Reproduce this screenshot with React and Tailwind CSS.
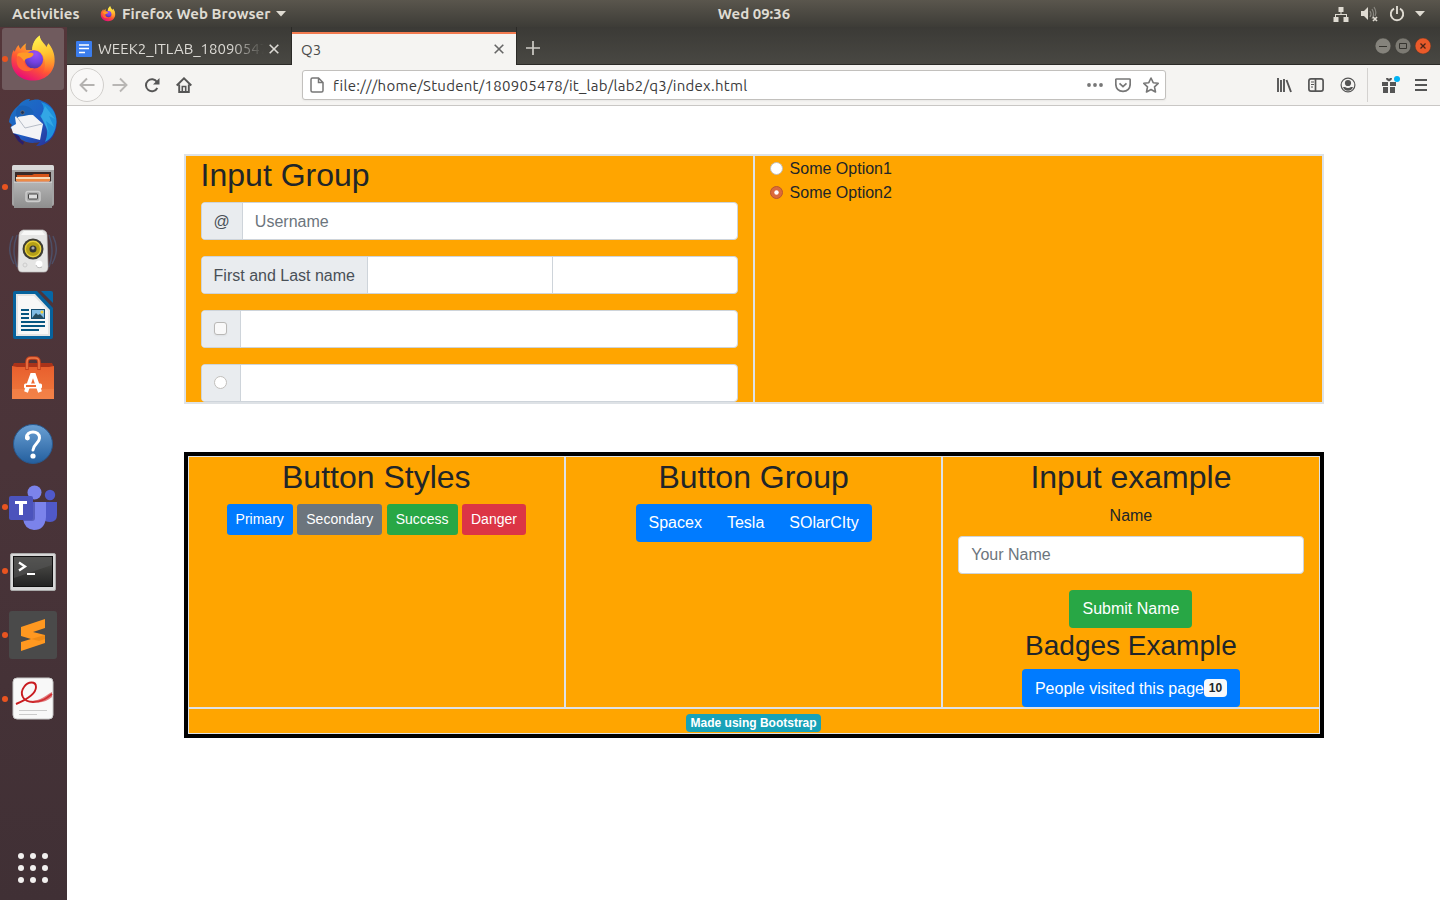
import React from "react";

const Firefox = ({ id, className }) => (
  <svg viewBox="-1 0 50 49" className={className}>
    <defs>
      <linearGradient id={id + "a"} x1="0.8" y1="0" x2="0.3" y2="1">
        <stop offset="0" stopColor="#fff44f" />
        <stop offset="0.35" stopColor="#ffa52b" />
        <stop offset="0.65" stopColor="#ff5634" />
        <stop offset="1" stopColor="#e6087c" />
      </linearGradient>
      <linearGradient id={id + "b"} x1="0.3" y1="0" x2="0.5" y2="1">
        <stop offset="0" stopColor="#fff64f" />
        <stop offset="0.5" stopColor="#ffc532" />
        <stop offset="1" stopColor="#ff8426" stopOpacity="0" />
      </linearGradient>
      <radialGradient id={id + "c"} cx="0.6" cy="0.2" r="0.9">
        <stop offset="0" stopColor="#9a50f5" />
        <stop offset="0.5" stopColor="#7542e5" />
        <stop offset="1" stopColor="#4a3198" />
      </radialGradient>
    </defs>
    <path fill={`url(#${id}a)`} d="M9 10C9.500 12 10 13 11 14C13 11 15 9 17 8C16 10 16 13 17 15L24 15C23 8 27 3 31 0C31 5 36 8 38 12L40 8C44 13 47 19 46.500 27C46 39 36 47 24 47C11 47 1.500 38 1.500 26C1.500 22 2 18 4 15L5 17C6 14 7 12 9 10Z" />
    <path fill={`url(#${id}b)`} d="M23 15C23 8 27 3 31 0C31 5 35 8 38 13L40 9C44 14 46 20 45 28C44 36 39 40 33 41C39 34 37 21 30 16Z" />
    <circle cx="25" cy="25" r="9.500" fill={`url(#${id}c)`} />
    <path fill="#ff9a25" d="M8 19C12 17 17 18 21 18C26 18 25 20 23 22C21 24 18 23 16 25C12 29 16 34 20 34C16 37 10 34 8 29C7 26 7 22 8 19Z" />
    <path fill="#ff6333" d="M8 21C12 22 14 25 15 28C16 33 20 35 25 34C21 39 13 38 9 33C7 30 6 25 8 21Z" />
  </svg>
);

const Thunderbird = () => (
  <svg viewBox="0 0 48 48" className="size-12">
    <defs>
      <linearGradient id="tb" x1="0" y1="0" x2="1" y2="1">
        <stop offset="0" stopColor="#1b75c4" />
        <stop offset="0.5" stopColor="#1e5fc5" />
        <stop offset="1" stopColor="#2c298f" />
      </linearGradient>
    </defs>
    <path fill="url(#tb)" d="M10 6C14 1 18 0 21 0L20 2C26 0 30 0 33 2C43 5 49 15 47.500 27C46 39 38 47 27 47L31 43C18 46 14 41 8 38L4 34L5 31L1 29L3 26L0 23C1 16 4 11 10 6Z" />
    <path fill="#1e91dc" d="M32 3C43 6 49 16 47 26C46 34 42 40 36 43C40 34 38 24 31 17C35 13 36 8 32 3Z" />
    <path fill="#3cb0e8" opacity=".7" d="M36 7L46 20L40 17L45 28L37 22L40 34L32 18Z" />
    <path fill="#2b1f6b" d="M4 34L10 37L12 41L15 43L14 46L9 42Z" />
    <path fill="#f3f4f6" d="M6 18L10 15L24 16L34 25L31 41L4 34L2 28L7 25Z" />
    <path fill="none" stroke="#b6bcc6" strokeWidth="1" d="M8 18L16 29L33 25" />
    <path fill="#1961b7" d="M10 7C16 5 23 8 25 14C18 18 11 16 8 19C6 15 7 10 10 7Z" />
    <circle cx="13.500" cy="13.500" r="1.800" fill="#17335f" stroke="#9b7656" strokeWidth=".5" />
  </svg>
);

const Files = () => (
  <svg viewBox="0 0 48 48" className="size-12">
    <defs>
      <linearGradient id="fi" x1="0" y1="0" x2="0" y2="1">
        <stop offset="0" stopColor="#b4b4b4" />
        <stop offset="1" stopColor="#8e8e8e" />
      </linearGradient>
    </defs>
    <rect x="3" y="2" width="42" height="41" rx="2" fill="#a4a4a4" />
    <path fill="#d9d9d9" d="M5 2H43Q45 2 45 5V7H3V5Q3 2 5 2Z" />
    <rect x="6" y="9" width="36" height="12" fill="#3a2a28" />
    <path fill="#d65519" d="M8 14V12H23L25 11H40V20H8Z" />
    <path fill="#f7d9b7" d="M7 14H41V16H7Z" />
    <path fill="#ed8b45" d="M7 16H41V18H7Z" />
    <path fill="url(#fi)" d="M5 19H43V45H5Z" />
    <path d="M5 19H43" stroke="#ddd" />
    <rect x="17" y="28.500" width="14" height="10" rx="2" fill="#aaa" stroke="#ccc" strokeWidth="1.500" />
    <rect x="19.500" y="31" width="9" height="5" rx=".5" fill="#ddd" stroke="#444" />
  </svg>
);

const Speaker = () => (
  <svg viewBox="0 0 48 48" className="size-12">
    <g fill="none" stroke="#4c648a" strokeWidth="1.500" opacity=".55">
      <path d="M4 9Q-3 23 5 37M8 8Q2 23 8 40M44 9Q51 23 43 37M40 8Q46 23 40 40" />
    </g>
    <path fill="#e5e5e4" stroke="#bfbfbf" strokeWidth=".7" d="M14 3H34Q38 4 38 8L39 40Q39 45 35 45H13Q9 45 9 40L10 8Q10 4 14 3Z" />
    <path fill="#f8f8f7" d="M15 4H33L36 8H12Z" />
    <circle cx="24" cy="22" r="10.500" fill="#3f3e35" />
    <circle cx="24" cy="22" r="7.700" fill="#b59f17" stroke="#e8cf39" strokeWidth="1.400" />
    <circle cx="24" cy="22" r="3.500" fill="#343434" />
    <circle cx="24" cy="21" r="1.600" fill="#aaa" />
    <circle cx="30" cy="37" r="3.500" fill="#fff" />
    <path d="M27 38Q28 42 33 40" stroke="#bbb" fill="none" />
    <circle cx="16" cy="38" r="2" fill="none" stroke="#ccc" />
  </svg>
);

const Writer = () => (
  <svg viewBox="0 0 48 48" className="size-12">
    <path fill="#06629d" d="M6 0H28L44 17V46Q44 48 42 48H6Q4 48 4 46V2Q4 0 6 0Z" />
    <path fill="#0667a5" d="M32 0H42Q44 0 44 2V12Z" />
    <path fill="#e4e4e4" d="M7 3H26L41 19V45H7Z" />
    <path fill="#f7f7f7" d="M9 5H25L39 20V43H9Z" />
    <g stroke="#075681" strokeWidth="1.800">
      <path d="M12 19H20M12 23H20M12 27H20M12 31H36M12 35H36M12 39H30" />
    </g>
    <rect x="22.500" y="18.500" width="13" height="9" fill="#82bce4" stroke="#164d70" />
    <circle cx="33" cy="21" r="1.500" fill="#f5cf35" />
    <path fill="#284c5d" d="M23 27L27 22L29 24L31 23L35 27Z" />
  </svg>
);

const Software = () => (
  <svg viewBox="0 -1 48 48" className="size-12">
    <defs>
      <linearGradient id="so" x1="0" y1="0" x2="0" y2="1">
        <stop offset="0" stopColor="#e85f2d" />
        <stop offset="1" stopColor="#f07a3e" />
      </linearGradient>
    </defs>
    <path fill="#a9331a" d="M5 7H43L45 11H3Z" />
    <path fill="url(#so)" d="M3 10L8 11H40L45 10V43H3Z" />
    <path fill="#f58a52" d="M3 33H45V43H3Z" opacity=".5" />
    <path d="M18 14V6Q18 2 22 2H26Q30 2 30 6V14" fill="none" stroke="#c6421e" strokeWidth="3.500" />
    <path d="M18 13V6Q18 2 22 2H26Q30 2 30 6V13" fill="none" stroke="#ef7b49" strokeWidth="1.500" />
    <path d="M17 36L23 19H25L31 36" fill="none" stroke="#fff" strokeWidth="4" />
    <rect x="15" y="27.500" width="18" height="5" rx="1.500" fill="#fff" />
    <rect x="17" y="29" width="10" height="2" fill="#ef6d35" />
  </svg>
);

const Help = () => (
  <svg viewBox="0 -1 48 48" className="size-12">
    <defs>
      <linearGradient id="he" x1="0" y1="0" x2="0" y2="1">
        <stop offset="0" stopColor="#6aa0d4" />
        <stop offset="1" stopColor="#245f9e" />
      </linearGradient>
    </defs>
    <circle cx="24" cy="24" r="19.500" fill="url(#he)" stroke="#28588d" />
    <circle cx="18.500" cy="18" r="2.400" fill="#fff" />
    <path d="M17.500 18C17 10 31 10 30.500 18C30.500 23 24.300 24 24 30" fill="none" stroke="#fff" strokeWidth="3" strokeLinecap="round" />
    <circle cx="24" cy="36" r="2.600" fill="#fff" />
  </svg>
);

const Teams = () => (
  <svg viewBox="0 0 48 48" className="size-12">
    <circle cx="41" cy="12" r="5.200" fill="#5059c9" />
    <path fill="#5059c9" d="M34 19H48V32Q48 39 41 39Q36 39 34 36Z" />
    <circle cx="25.500" cy="9.500" r="7" fill="#7b83eb" />
    <path fill="#7b83eb" d="M14 19H37V34Q36 47 25 47Q15 46 14 35Z" />
    <path fill="#4a50ad" opacity=".7" d="M14 19H26V35Q26 38 23 38H14Z" />
    <rect y="13" width="24" height="24" rx="2" fill="#4b53bc" />
    <path fill="#fff" d="M6 18H18V21H14V32H10V21H6Z" />
  </svg>
);

const Terminal = () => (
  <svg viewBox="0 -1 48 48" className="size-12">
    <defs>
      <linearGradient id="te" x1="0" y1="0" x2="0" y2="1">
        <stop offset="0" stopColor="#545450" />
        <stop offset="1" stopColor="#222" />
      </linearGradient>
    </defs>
    <rect x="1.500" y="5.500" width="45" height="37" rx="1.500" fill="#d7d7d7" stroke="#aaa" />
    <rect x="4.500" y="8.500" width="39" height="30" fill="url(#te)" stroke="#111" />
    <path fill="#555" opacity=".6" d="M5 9H43V17L5 30Z" />
    <path d="M10 14.500L16 18.500L10 22.500" stroke="#fff" strokeWidth="2.300" fill="none" />
    <path d="M18 26H26" stroke="#fff" strokeWidth="2" />
  </svg>
);

const Sublime = () => (
  <svg viewBox="0 0 48 48" className="size-12">
    <rect width="48" height="48" rx="3" fill="#4a4a4a" />
    <path fill="#ff9820" d="M12 16L36 8V17L24 21L36 24V32L12 40V31L22 28L12 25Z" />
    <path fill="#e38010" d="M22 28L36 24V28L30 30Z" opacity=".6" />
  </svg>
);

const Reader = () => (
  <svg viewBox="0 1 48 48" className="size-12">
    <rect x="4" y="4" width="40" height="41" rx="4" fill="#f8f8f8" stroke="#c8c8c8" />
    <path d="M7 30C19 25 27 19 27 13C27 7 19 7 15 13C10 20 14 28 24 28C33 28 38 24 43 20" fill="none" stroke="#c91c20" strokeWidth="1.900" />
    <path fill="#d63b3d" opacity=".65" d="M20 27C33 27 38 20 43 18V23C37 28 31 30 20 27Z" />
    <path d="M10 36.500H38M10 40.500H28" stroke="#cbcbcb" />
  </svg>
);

const dock = [
  { Icon: () => <Firefox id="dock" className="size-12" />, running: true, active: true },
  { Icon: Thunderbird },
  { Icon: Files, running: true },
  { Icon: Speaker },
  { Icon: Writer },
  { Icon: Software },
  { Icon: Help },
  { Icon: Teams, running: true },
  { Icon: Terminal, running: true },
  { Icon: Sublime, running: true },
  { Icon: Reader, running: true },
];

function TopBar() {
  return (
    <header className="grid h-[27px] shrink-0 grid-cols-3 items-center bg-linear-to-b from-[#5a564d] to-[#3d3c37] text-[15px] font-bold leading-none text-[#dfdbd2]">
      <div className="flex items-center pl-3">
        <span className="w-[68px] whitespace-nowrap tracking-[0.1px]">Activities</span>
        <Firefox id="bar" className="ml-5 size-4" />
        <span className="ml-[6px] w-[149px] whitespace-nowrap tracking-[0.07px]">Firefox Web Browser</span>
        <svg viewBox="0 0 10 6" className="ml-[5px] h-[6px] w-[10px]"><path fill="#dfdbd2" d="M0 0H10L5 5.500Z" /></svg>
      </div>
      <div className="pl-[68px] text-center"><span>Wed 09:36</span></div>
      <div className="flex items-center justify-end pr-[15px]">
        <svg viewBox="0 0 16 16" className="size-4"><path fill="#dfdbd2" d="M5.500 1H10.500V6H8.500V8H14V11H15.500V16H10.500V11H13V9H3V11H5.500V16H.5V11H2V8H7.500V6H5.500Z" /></svg>
        <svg viewBox="0 0 17 16" className="ml-3 h-4 w-[17px]">
          <path fill="#dfdbd2" d="M0 5H3L7 1V14L3 10H0Z" />
          <path d="M9 5Q11 8 9 11M11 3Q14 8 11 13M13 1Q16 6 14 10" stroke="#898780" fill="none" strokeWidth="1.200" />
          <path d="M12 11L16 15M16 11L12 15" stroke="#dfdbd2" strokeWidth="1.700" />
        </svg>
        <svg viewBox="0 0 16 16" className="ml-[11px] size-4"><path d="M5 2.600A6.200 6.200 0 1 0 11 2.600M8 0V8" fill="none" stroke="#dfdbd2" strokeWidth="1.900" /></svg>
        <svg viewBox="0 0 10 6" className="ml-[10px] h-[6px] w-[10px]"><path fill="#dfdbd2" d="M0 0H10L5 5.500Z" /></svg>
      </div>
    </header>
  );
}

function Dock() {
  return (
    <nav className="flex w-[67px] shrink-0 flex-col bg-linear-to-b from-[#54363a] via-[#4a3439] to-[#403035]">
      {dock.map(({ Icon, running, active }, i) => (
        <div key={i} className="flex h-16 items-center pl-[2px]">
          <div className={active ? "flex h-[62px] w-[62px] items-center gap-px rounded-[3px] bg-[#705b5e]" : "flex h-[62px] w-[62px] items-center gap-px"}>
            <span className={running ? "size-[6px] shrink-0 rounded-full bg-[#e95420]" : "size-[6px] shrink-0"} />
            <Icon />
          </div>
        </div>
      ))}
      <div className="mt-auto mb-[17px] ml-[18px] grid w-[30px] grid-cols-3 gap-[6px]">
        {Array.from({ length: 9 }, (_, i) => <span key={i} className="size-[6px] rounded-full bg-[#f2f0ef]" />)}
      </div>
    </nav>
  );
}

const Close = ({ className }) => (
  <svg viewBox="0 0 10 10" className={className}><path d="M.7 .7L9.300 9.300M9.300 .7L.7 9.300" stroke="currentColor" strokeWidth="1.600" /></svg>
);

function TabStrip() {
  return (
    <div className="flex h-[38px] shrink-0 bg-linear-to-b from-[#3b3a36] to-[#494843] text-[15px] leading-none">
      <div className="flex w-[225px] items-center border-r border-b border-[#2b2a27] pl-[9px] pt-[6px] text-[#dcdad5]">
        <svg viewBox="0 0 16 16" className="size-4"><rect width="16" height="16" rx="1" fill="#3b7ded" /><path d="M3 4H13M3 7.500H13M3 11.500H9" stroke="#fff" strokeWidth="1.600" /></svg>
        <span className="ml-[6px] w-[166px] overflow-hidden whitespace-nowrap py-1 [mask-image:linear-gradient(to_right,black_80%,transparent_100%)]">WEEK2_ITLAB_180905478</span>
        <Close className="ml-[5px] size-[10px]" />
      </div>
      <div className="mt-[5px] flex w-[224px] items-center justify-between border-t-2 border-[#f27b50] bg-[#f5f4f2] pb-px pl-[9px] pr-3 text-[#4c4c4c]">
        <span>Q3</span>
        <Close className="size-[10px] text-[#666]" />
      </div>
      <div className="flex flex-1 items-center border-b border-l border-[#2b2a27] pl-[9px] pt-[5px]">
        <svg viewBox="0 0 14 14" className="size-[14px]"><path d="M7 0V14M0 7H14" stroke="#cfcdc7" strokeWidth="1.700" /></svg>
        <div className="mb-[5px] ml-auto mr-[9px] flex gap-1">
          <svg viewBox="0 0 16 16" className="size-4"><circle cx="8" cy="8" r="7.900" fill="#85837c" stroke="#302f2c" strokeWidth=".4" /><path d="M4 8.500H12" stroke="#35342f" /></svg>
          <svg viewBox="0 0 16 16" className="size-4"><circle cx="8" cy="8" r="7.900" fill="#7c7a73" stroke="#302f2c" strokeWidth=".4" /><path d="M4.500 5.500H11.500V10.500H4.500Z" fill="none" stroke="#35342f" /></svg>
          <svg viewBox="0 0 16 16" className="size-4"><circle cx="8" cy="8" r="7.900" fill="#ea5a2a" stroke="#52301f" strokeWidth=".4" /><path d="M5.500 5.500L10.500 10.500M10.500 5.500L5.500 10.500" stroke="#4b2417" strokeWidth="1.300" /></svg>
        </div>
      </div>
    </div>
  );
}

function Toolbar() {
  return (
    <div className="flex h-[41px] shrink-0 items-center border-b border-[#c9c7c5] bg-[#f5f4f2] pl-[3px] text-[#555]">
      <div className="flex size-[34px] items-center justify-center rounded-full border border-[#d1cfcc] bg-[#f9f8f7]">
        <svg viewBox="0 0 16 16" className="size-4"><path d="M15.500 8H1.500M8 1.500L1.500 8L8 14.500" fill="none" stroke="#b4b2b0" strokeWidth="1.900" /></svg>
      </div>
      <svg viewBox="0 0 16 16" className="ml-2 size-4"><path d="M.5 8H14.500M8 1.500L14.500 8L8 14.500" fill="none" stroke="#b8b6b4" strokeWidth="1.900" /></svg>
      <svg viewBox="0 0 16 16" className="ml-4 size-4"><path d="M13 5A6 6 0 1 0 13.300 11" fill="none" stroke="#555" strokeWidth="2" /><path fill="#555" d="M15.500 1V7.500H9Z" /></svg>
      <svg viewBox="0 0 16 16" className="ml-4 size-4"><path d="M.7 8.500L8 1.300L15.300 8.500M3.200 7.500V15H12.800V7.500" fill="none" stroke="#555" strokeWidth="1.900" /><path d="M6.300 15V9.500H9.700V15" fill="none" stroke="#555" strokeWidth="1.600" /></svg>
      <div className="ml-[110px] flex h-[30px] w-[864px] items-center rounded-[3px] border border-[#c2c0bd] bg-white pl-[7px] pr-[6px] shadow-xs">
        <svg viewBox="0 0 14 16" className="h-4 w-[14px]"><path d="M2.500 1H8.500L13 5.500V13.500Q13 15 11.500 15H2.500Q1 15 1 13.500V2.500Q1 1 2.500 1ZM8.500 1V5.500H13" fill="none" stroke="#777" strokeWidth="1.500" /></svg>
        <span className="ml-[9px] whitespace-nowrap pt-[2px] text-[15px] tracking-[0.27px] text-[#3b3b3b]">file:///home/Student/180905478/it_lab/lab2/q3/index.html</span>
        <svg viewBox="0 0 16 4" className="ml-auto h-1 w-4"><g fill="#777"><circle cx="2" cy="2" r="1.900" /><circle cx="8" cy="2" r="1.900" /><circle cx="14" cy="2" r="1.900" /></g></svg>
        <svg viewBox="0 0 16 16" className="ml-3 size-4"><path d="M1.500 2H14.500Q15.200 2 15.200 3V7Q15 14 8 14.300Q1 14 .8 7V3Q.8 2 1.500 2ZM4.500 6.300L8 9.600L11.500 6.300" fill="none" stroke="#777" strokeWidth="1.700" /></svg>
        <svg viewBox="0 0 16 16" className="ml-3 size-4"><path d="M8 1L10.200 5.700L15.200 6.300L11.500 9.800L12.500 15L8 12.500L3.500 15L4.500 9.800L.8 6.300L5.800 5.700Z" fill="none" stroke="#777" strokeWidth="1.600" strokeLinejoin="round" /></svg>
      </div>
      <svg viewBox="0 0 16 16" className="ml-[110px] size-4"><path d="M2 1V15M5 3V15M8 2V15M10.500 3L15 15" stroke="#555" strokeWidth="1.900" /></svg>
      <svg viewBox="0 0 16 16" className="ml-4 size-4"><path d="M3 1.900H13Q15.100 1.900 15.100 4V12Q15.100 14.100 13 14.100H3Q.9 14.100 .9 12V4Q.9 1.900 3 1.900ZM7.500 2V14" fill="none" stroke="#555" strokeWidth="1.700" /><path d="M3 5H6M3 7.500H6M3 10H5" stroke="#555" /></svg>
      <svg viewBox="0 0 16 16" className="ml-4 size-4"><circle cx="8" cy="8" r="6.900" fill="none" stroke="#555" strokeWidth="1.200" /><circle cx="8" cy="6" r="3.100" fill="#555" /><path fill="#555" d="M3 10H5Q8 12 11 10H13Q12 13.500 8 13.700Q4 13.500 3 10Z" /></svg>
      <div className="ml-[11px] h-[34px] w-px bg-[#d4d2d0]" />
      <svg viewBox="0 0 20 20" className="ml-[13px] size-5"><path fill="#555" d="M1 7H7V11H1ZM9 7H15V11H9ZM2 12H7V18H2ZM9 12H14V18H9ZM5 3H7L8 4L9 3H11L10.500 5L8 6.500L5.500 5Z" /><circle cx="16" cy="4" r="3" fill="#00b3f4" /></svg>
      <svg viewBox="0 0 12 12" className="ml-[14px] size-3"><path d="M0 1H12M0 6H12M0 11H12" stroke="#555" strokeWidth="1.900" /></svg>
    </div>
  );
}

const Field = ({ children, addon, label }) => (
  <div className="mb-4 flex h-[38px] shrink-0 rounded-[4px] border border-[#ced4da] bg-white text-[#495057]">
    <div className="flex items-center rounded-l-[3px] border-r border-[#ced4da] bg-[#e9ecef] px-3 pt-[2px]">{addon}</div>
    <div className="flex flex-1 items-center px-3 pt-[2px] text-[#6c757d]">{label}</div>
    {children}
  </div>
);

const H2 = ({ children }) => <h2 className="mb-2 text-[32px] leading-[38.4px]">{children}</h2>;

const Radio = ({ checked }) => (
  <svg viewBox="0 0 13 13" className="size-[13px]">
    <circle cx="6.500" cy="6.500" r="6" fill={checked ? "#db6a3c" : "#fff"} stroke={checked ? "#b9572f" : "#c0bebb"} />
    <circle cx="6.500" cy="6.500" r={checked ? 2.200 : 0} fill="#fff" />
  </svg>
);

const small = "h-[31px] rounded-[3.2px] px-[9px] text-[14px] leading-[31px] text-white";

function Page() {
  return (
    <main className="flex-1 bg-white pl-[116.6px] pt-12 font-['Liberation_Sans',Arial,sans-serif] text-[16px] leading-6 text-[#212529]">
      <section className="flex h-[250px] w-[1140px] border border-[#dee2e6] bg-[orange]">
        <div className="flex w-[569px] flex-col border border-[#dee2e6] px-[15px]">
          <H2>Input Group</H2>
          <Field addon="@" label="Username" />
          <Field addon="First and Last name"><div className="flex-1 border-l border-[#ced4da] px-3" /></Field>
          <Field addon={<span className="mb-[3px] w-[14px]"><span className="block size-[13px] rounded-[3px] border border-[#b9b8b6] bg-[#f9f9f9] shadow-xs" /></span>} />
          <Field addon={<span className="mb-[3px] w-[14px]"><Radio /></span>} />
        </div>
        <div className="w-[569px] border border-[#dee2e6] px-[15px]">
          <label className="flex h-6 items-center gap-[7px]"><Radio /><span className="pt-[2px]">Some Option1</span></label>
          <label className="flex h-6 items-center gap-[7px]"><Radio checked /><span className="pt-[2px]">Some Option2</span></label>
        </div>
      </section>
      <section className="mt-12 w-[1140px] border-4 border-black bg-[orange] text-center">
        <div className="grid h-[252px] grid-cols-3">
          <div className="border border-[#dee2e6] px-[15px] pt-[0.6px]">
            <H2>Button Styles</H2>
            <div className="flex justify-center gap-[4.45px]">
              <button className={small + " bg-[#007bff]"}>Primary</button>
              <button className={small + " bg-[#6c757d]"}>Secondary</button>
              <button className={small + " bg-[#28a745]"}>Success</button>
              <button className={small + " bg-[#dc3545]"}>Danger</button>
            </div>
          </div>
          <div className="border border-[#dee2e6] px-[15px] pt-[0.6px]">
            <H2>Button Group</H2>
            <div className="inline-flex h-[38px] items-center overflow-hidden rounded-[4px] bg-[#007bff] text-white">
              <button className="pl-[13px] pr-[12.5px]">Spacex</button>
              <button className="px-[12.5px]">Tesla</button>
              <button className="pl-[12.5px] pr-[13px]">SOlarCIty</button>
            </div>
          </div>
          <div className="flex flex-col items-center border border-[#dee2e6] px-[15px] pt-[0.6px]">
            <H2>Input example</H2>
            <label className="mb-2">Name</label>
            <div className="mb-4 flex h-[38px] w-full shrink-0 items-center rounded-[4px] border border-[#ced4da] bg-white px-3 text-[#6c757d]">Your Name</div>
            <button className="h-[38px] shrink-0 rounded-[4px] bg-[#28a745] px-[13px] text-white">Submit Name</button>
            <h3 className="mb-[6px] pt-px text-[28px] leading-[34px]">Badges Example</h3>
            <button className="flex h-[38px] shrink-0 items-center rounded-[4px] bg-[#007bff] px-[13px] text-white">
              <span className="pt-[2px]">People visited this page</span>
              <span className="rounded-[4px] bg-[#f8f9fa] px-[4.8px] py-[3px] text-[12px] font-bold leading-3 text-[#212529]">10</span>
            </button>
          </div>
        </div>
        <footer className="flex h-[26px] items-center justify-center border border-[#dee2e6] pt-[3px]">
          <span className="rounded-[4px] bg-[#17a2b8] px-[4.8px] py-[3px] text-[12px] font-bold leading-3 text-white">Made using Bootstrap</span>
        </footer>
      </section>
    </main>
  );
}

export default function App() {
  return (
    <div className="flex h-[900px] w-[1440px] flex-col overflow-hidden font-['Ubuntu','Noto_Sans',sans-serif]">
      <TopBar />
      <div className="flex min-h-0 flex-1">
        <Dock />
        <div className="flex min-w-0 flex-1 flex-col">
          <TabStrip />
          <Toolbar />
          <Page />
        </div>
      </div>
    </div>
  );
}
